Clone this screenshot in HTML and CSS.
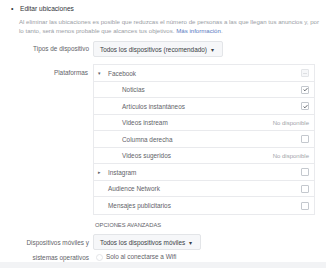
FILE: index.html
```html
<!DOCTYPE html>
<html lang="es">
<head>
<meta charset="utf-8">
<link rel="stylesheet" href="styles.css">
</head>
<body>
<div class="page">
  <div class="head"><span class="bullet">•</span><span class="title">Editar ubicaciones</span></div>
  <p class="desc">Al eliminar las ubicaciones es posible que reduzcas el número de personas a las que llegan tus anuncios y, por lo tanto, será menos probable que alcances tus objetivos. <a class="link">Más información</a>.</p>

  <div class="field f-device">
    <div class="label">Tipos de dispositivo</div>
    <div class="ctl"><div class="select sel1">Todos los dispositivos (recomendado) <span class="caret">▾</span></div></div>
  </div>

  <div class="field f-plat">
    <div class="label lab-plat">Plataformas</div>
    <div class="ctl">
      <div class="box">
        <div class="prow r17"><span class="tog">▾</span><span class="pname">Facebook</span><span class="cb ind"></span></div>
        <div class="prow sub r16"><span class="pname">Noticias</span><span class="cb chk"><svg viewBox="0 0 7 7"><path d="M1.6 3.6 L2.9 4.8 L5.4 2.2" fill="none" stroke="#4b4f56" stroke-width="0.9"/></svg></span></div>
        <div class="prow sub r17"><span class="pname">Artículos instantáneos</span><span class="cb chk"><svg viewBox="0 0 7 7"><path d="M1.6 3.6 L2.9 4.8 L5.4 2.2" fill="none" stroke="#4b4f56" stroke-width="0.9"/></svg></span></div>
        <div class="prow sub r16"><span class="pname">Videos instream</span><span class="na">No disponible</span></div>
        <div class="prow sub r17"><span class="pname">Columna derecha</span><span class="cb"></span></div>
        <div class="prow sub r16"><span class="pname">Videos sugeridos</span><span class="na">No disponible</span></div>
        <div class="prow r17"><span class="tog">▸</span><span class="pname">Instagram</span><span class="cb"></span></div>
        <div class="prow r16"><span class="tog"></span><span class="pname">Audience Network</span><span class="cb"></span></div>
        <div class="prow r18"><span class="tog"></span><span class="pname">Mensajes publicitarios</span><span class="cb"></span></div>
      </div>
    </div>
  </div>

  <div class="adv">OPCIONES AVANZADAS</div>

  <div class="field f-mobile">
    <div class="label lab-mob">Dispositivos móviles y sistemas operativos</div>
    <div class="ctl">
      <div class="select sel2">Todos los dispositivos móviles <span class="caret">▾</span></div>
      <div class="wifi"><span class="radio"></span>Solo al conectarse a Wifi</div>
    </div>
  </div>
</div>
<div class="band"></div>
</body>
</html>
```

FILE: styles.css
```css
html, body {
  margin: 0;
  padding: 0;
  background: #ffffff;
}
body {
  width: 326px;
  height: 268px;
  overflow: hidden;
  position: relative;
  font-family: "Liberation Sans", Arial, sans-serif;
  font-size: 6.4px;
  color: #5f6369;
}
.page {
  padding-top: 3px;
}
.head {
  display: flex;
  align-items: center;
  height: 10px;
  padding-left: 11px;
  color: #2f3338;
}
.bullet {
  width: 9px;
  font-size: 7px;
}
.title {
  font-size: 6.6px;
}
.desc {
  margin: 4px 0 0 19px;
  width: 300px;
  line-height: 9px;
  color: #9a9ea5;
  font-size: 6.1px;
}
.link {
  color: #5a7bbf;
}
.field {
  display: grid;
  grid-template-columns: 89px 1fr;
  column-gap: 4px;
}
.label {
  text-align: right;
  line-height: 16px;
}
.f-device {
  margin-top: 6px;
}
.select {
  display: inline-flex;
  align-items: center;
  height: 14px;
  padding: 0 6px;
  border: 1px solid #e3e5e8;
  border-radius: 2px;
  background: #f6f7f9;
  color: #3a3e44;
  font-size: 6.4px;
  box-sizing: content-box;
}
.sel1 { width: 116px; }
.caret {
  margin-left: 4px;
  font-size: 6px;
}
.f-plat {
  margin-top: 7px;
}
.lab-plat {
  line-height: 18px;
  padding-right: 1px;
}
.box {
  width: 222px;
  border: 1px solid #e9eaed;
  border-bottom: none;
  box-sizing: border-box;
}
.prow {
  display: flex;
  align-items: center;
  border-bottom: 1px solid #e9eaed;
  box-sizing: border-box;
  padding-right: 5px;
}
.r16 { height: 16px; }
.r17 { height: 17px; }
.r18 { height: 18px; }
.tog {
  width: 10px;
  padding-left: 4px;
  font-size: 5px;
  color: #5f6369;
}
.sub .pname {
  padding-left: 28px;
}
.pname {
  flex: 1;
}
.na {
  color: #a0a4aa;
  font-size: 6px;
}
.cb {
  width: 6px;
  height: 6px;
  border: 1px solid #c4c8ce;
  border-radius: 1px;
  background: #fff;
  position: relative;
}
.cb svg {
  position: absolute;
  left: -0.5px;
  top: -0.5px;
  width: 7px;
  height: 7px;
}
.ind {
  border-color: #e3e5e8;
  background: #f6f7f9;
}
.ind::after {
  content: "";
  position: absolute;
  left: 1px;
  right: 1px;
  top: 2.5px;
  height: 1px;
  background: #dddfe2;
}
.adv {
  margin: 6px 0 0 95px;
  font-size: 5.8px;
  line-height: 9px;
}
.f-mobile {
  margin-top: 4px;
}
.lab-mob {
  line-height: 15px;
  padding: 1px 0 0 14px;
}
.sel2 {
  width: 94px;
}
.wifi {
  display: flex;
  align-items: center;
  margin-top: 3px;
  padding-left: 3px;
  line-height: 8px;
}
.radio {
  width: 5px;
  height: 5px;
  border: 1px solid #e3e5e8;
  border-radius: 50%;
  margin-right: 3px;
}
.band {
  position: absolute;
  left: 0;
  right: 0;
  bottom: 0;
  height: 6px;
  background: #f2f3f5;
}
```
